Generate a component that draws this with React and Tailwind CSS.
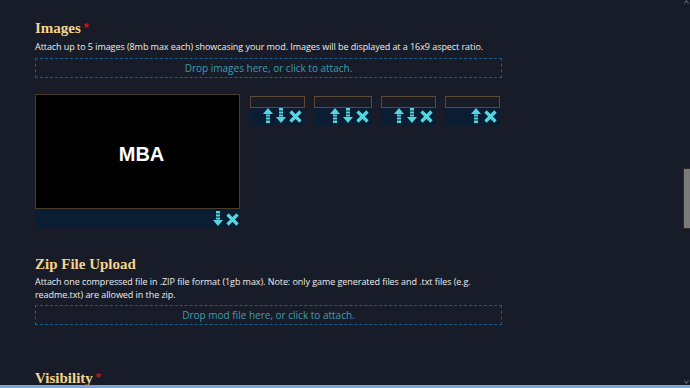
import React from 'react';

const serif = { fontFamily: '"Liberation Serif", "DejaVu Serif", serif' };
const body = { fontFamily: '"Open Sans", "Noto Sans", sans-serif' };

const UpIcon = () => (
  <svg width="10" height="15" viewBox="0 0 10 15" className="block">
    <polygon points="5,0 10,6 0,6" fill="#55d6e2" />
    <rect x="3" y="6.5" width="4" height="2" fill="#55d6e2" />
    <rect x="3" y="9.5" width="4" height="2" fill="#55d6e2" />
    <rect x="3" y="12.5" width="4" height="2.5" fill="#55d6e2" />
  </svg>
);

const DownIcon = () => (
  <svg width="10" height="15" viewBox="0 0 10 15" className="block">
    <rect x="3" y="0" width="4" height="2.5" fill="#55d6e2" />
    <rect x="3" y="3.5" width="4" height="2" fill="#55d6e2" />
    <rect x="3" y="6.5" width="4" height="2" fill="#55d6e2" />
    <polygon points="0,9 10,9 5,15" fill="#55d6e2" />
  </svg>
);

const XIcon = () => (
  <svg width="13" height="13" viewBox="0 0 13 13" className="block">
    <path d="M1.5 1.5 L11.5 11.5 M11.5 1.5 L1.5 11.5" stroke="#55d6e2" strokeWidth="3.2" />
  </svg>
);

const Star = ({ className }) => (
  <span className={`relative text-[13px] font-bold text-[#c01818] leading-none ${className}`} style={{ fontFamily: '"Liberation Sans", sans-serif' }}>*</span>
);

const Heading = ({ children, required }) => (
  <div className="flex items-start text-[15px] leading-[20px] font-bold text-[#f4d58d]" style={serif}>
    <span>{children}</span>
    {required && <Star className="ml-[3px] top-[3px]" />}
  </div>
);

const DropZone = ({ label }) => (
  <div className="h-[20px] border border-dashed border-[#17608a] flex items-center justify-center text-[10px] text-[#3f9cb2]" style={body}>
    {label}
  </div>
);

const thumbs = [
  { w: 'w-[55px]', up: true, down: true },
  { w: 'w-[58px]', up: true, down: true },
  { w: 'w-[55px]', up: true, down: true },
  { w: 'w-[55px]', up: true, down: false },
];

export default function App() {
  return (
    <div className="w-[690px] h-[388px] flex flex-col bg-[#181c28] overflow-hidden">
      <div className="flex flex-1 min-h-0">
        <div className="flex-1 flex flex-col">
          <div className="h-[1px] bg-[#3b3426]" />
          <div className="h-[2px] bg-[#b88a3e]" />

          <div className="ml-[35px] w-[467px]">
            <div className="mt-[18px]">
              <Heading required>Images</Heading>
            </div>
            <p className="mt-[3px] text-[9px] leading-[12px] text-[#ececec] tracking-[-0.06px]" style={body}>
              Attach up to 5 images (8mb max each) showcasing your mod. Images will be displayed at a 16x9 aspect ratio.
            </p>
            <div className="mt-[5px]">
              <DropZone label="Drop images here, or click to attach." />
            </div>

            <div className="mt-[16px] flex items-start">
              <div className="w-[205px]">
                <div className="h-[115px] bg-black border border-[#4b3c29] flex items-center justify-center">
                  <span className="ml-[8px] mt-[5px] text-[20px] font-bold text-white" style={{ fontFamily: '"Liberation Sans", Arial, sans-serif' }}>MBA</span>
                </div>
                <div className="h-[19px] bg-[#0a1d33] flex items-end justify-end gap-[3px] pr-[1px] pb-[2px]">
                  <DownIcon />
                  <XIcon />
                </div>
              </div>

              <div className="ml-[10px] mt-[2px] flex gap-[9px]">
                {thumbs.map((t, i) => (
                  <div key={i} className={t.w}>
                    <div className="h-[12px] border border-[#5b4931] bg-[#1a1d27]" />
                    <div className="h-[17px] bg-[#0a1d33] flex items-end justify-end gap-[3px] pr-[3px] pb-[2px]">
                      {t.up && <UpIcon />}
                      {t.down && <DownIcon />}
                      <XIcon />
                    </div>
                  </div>
                ))}
              </div>
            </div>

            <div className="mt-[26px]">
              <Heading>Zip File Upload</Heading>
            </div>
            <p className="mt-[1px] text-[9px] leading-[13px] text-[#ececec] tracking-[-0.06px]" style={body}>
              Attach one compressed file in .ZIP file format (1gb max). Note: only game generated files and .txt files (e.g. readme.txt) are allowed in the zip.
            </p>
            <div className="mt-[4px]">
              <DropZone label="Drop mod file here, or click to attach." />
            </div>

            <div className="mt-[43px]">
              <Heading required>Visibility</Heading>
            </div>
          </div>
        </div>

        <div className="w-[7px] flex flex-col items-center bg-[#181c28]">
          <svg width="5" height="4" viewBox="0 0 5 4">
            <path d="M0.5 3.5 L2.5 0.5 L4.5 3.5" stroke="#777" strokeWidth="1" fill="none" />
          </svg>
          <div className="mt-[164px] w-[8px] h-[61px] bg-[#7a7a7a] border border-[#2a2a2a]" />
          <div className="flex-1" />
          <svg width="5" height="4" viewBox="0 0 5 4" className="mb-[1px]">
            <path d="M0.5 0.5 L2.5 3.5 L4.5 0.5" stroke="#777" strokeWidth="1" fill="none" />
          </svg>
        </div>
      </div>
      <div className="h-[3px] bg-[#7aa6d6]" />
    </div>
  );
}
